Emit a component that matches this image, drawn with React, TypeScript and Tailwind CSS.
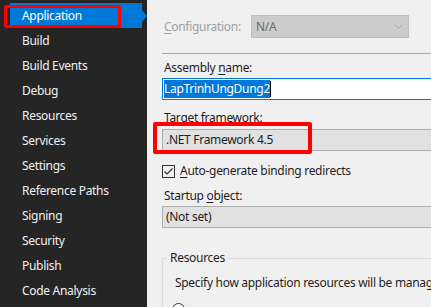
import React from 'react';

const navItems = [
  'Build',
  'Build Events',
  'Debug',
  'Resources',
  'Services',
  'Settings',
  'Reference Paths',
  'Signing',
  'Security',
  'Publish',
  'Code Analysis',
];

const font = { fontFamily: '"Noto Sans", "Open Sans", sans-serif' };

const Chevron: React.FC = () => (
  <svg width="9" height="5" viewBox="0 0 9 5" className="shrink-0">
    <path d="M0.5 0.5 L4.5 4.5 L8.5 0.5" fill="none" stroke="#a8a8a8" strokeWidth="1" />
  </svg>
);

const App: React.FC = () => {
  return (
    <div
      className="relative flex w-[431px] h-[307px] overflow-hidden text-[12px] leading-[16px] tracking-[-0.3px]"
      style={font}
    >
      {/* sidebar */}
      <div className="w-[147px] shrink-0 bg-[#252526] pt-[3px] text-[#f1f1f1]">
        <div className="relative ml-[10px] w-[132px] h-[25px] bg-[#0078d7] pl-[12px] flex items-center text-white">
          Application
          <div className="absolute right-[-5px] top-[7px] w-0 h-0 border-y-[6px] border-y-transparent border-l-[5px] border-l-[#0078d7]"></div>
        </div>
        {navItems.map((item) => (
          <div key={item} className="h-[25px] pl-[22px] flex items-center">
            {item}
          </div>
        ))}
      </div>

      {/* property page */}
      <div className="flex-1 bg-[#f0f0f0] pl-[15px] pt-[15px] text-[#1e1e1e]">
        <div className="flex items-center h-[23px]">
          <span className="w-[89px] pl-[2px] text-[#a0a0a0]">
            <span className="underline underline-offset-2">C</span>onfiguration:
          </span>
          <div className="w-[158px] h-[23px] bg-[#cccccc] border border-[#bfbfbf] flex items-center justify-between pl-[4px] pr-[5px] text-[#6d6d6d]">
            N/A
            <Chevron />
          </div>
        </div>

        <div className="mt-[15px] h-px bg-[#a8a8a8] w-[300px]"></div>

        <div className="mt-[6px] pl-[2px]">
          Assembly <span className="underline underline-offset-2">n</span>ame:
        </div>
        <div className="mt-[2px] w-[300px] h-[22px] bg-white border border-[#0078d7] flex items-center pl-[1px]">
          <span className="bg-[#0078d7] text-white leading-[18px]">LapTrinhUngDung2</span>
          <span className="w-px h-[16px] bg-black"></span>
        </div>

        <div className="mt-[10px] pl-[2px]">Target framework:</div>
        <div className="mt-[3px] w-[300px] h-[22px] bg-[#e1e1e1] border border-[#adadad] flex items-center pl-[3px]">
          .NET Framework 4.5
        </div>

        <div className="mt-[13px] flex items-center h-[14px] gap-[5px]">
          <svg width="13" height="13" viewBox="0 0 13 13" className="shrink-0">
            <rect x="0.5" y="0.5" width="12" height="12" fill="#f0f0f0" stroke="#333333" />
            <path d="M2.5 6.5 L5 9 L10.5 3.5" fill="none" stroke="#333333" strokeWidth="1.2" />
          </svg>
          <span>
            <span className="underline underline-offset-2">A</span>uto-generate binding redirects
          </span>
        </div>

        <div className="mt-[10px] pl-[2px]">
          Startup <span className="underline underline-offset-2">o</span>bject:
        </div>
        <div className="mt-[2px] w-[300px] h-[22px] bg-[#e1e1e1] border border-[#adadad] flex items-center pl-[3px]">
          (Not set)
        </div>

        <fieldset className="mt-[22px] w-[300px] h-[80px] border border-[#dcdcdc] pl-[12px] pr-0">
          <legend className="ml-[-8px] px-[3px]">Resources</legend>
          <div className="mt-[9px] whitespace-nowrap">
            Specify how application resources will be managed:
          </div>
          <div className="mt-[12px] ml-[-3px] w-[13px] h-[13px] rounded-full border border-[#333333] bg-white"></div>
        </fieldset>
      </div>

      {/* annotation boxes */}
      <div className="absolute left-[4px] top-[5px] w-[117px] h-[23px] border-[3px] border-[#ff0000] rounded-[2px]"></div>
      <div className="absolute left-[153px] top-[122px] w-[159px] h-[32px] border-[4px] border-[#ff0000] rounded-[2px]"></div>
    </div>
  );
};

export default App;
